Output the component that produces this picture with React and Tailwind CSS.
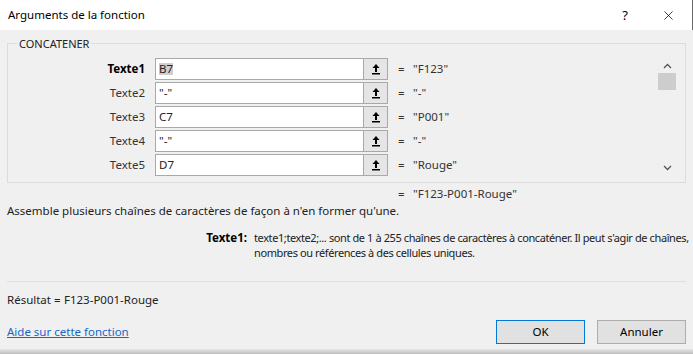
import { X } from "lucide-react";

const font = { fontFamily: '"Segoe UI", "Noto Sans", "Open Sans", sans-serif' };

const RefIcon = () => (
  <svg width="10" height="12" viewBox="0 0 10 12" className="text-black">
    <path d="M5 1 L1.5 5 H4 V9 H6 V5 H8.5 Z" fill="currentColor" />
    <rect x="1" y="10" width="8" height="1.5" fill="currentColor" />
  </svg>
);

const Chevron = ({ down }) => (
  <svg width="9" height="6" viewBox="0 0 9 6" className="text-[#555]">
    <path d={down ? "M1 1 L4.5 4.5 L8 1" : "M1 5 L4.5 1.5 L8 5"} fill="none" stroke="currentColor" strokeWidth="1.3" />
  </svg>
);

const rows = [
  { label: "Texte1", value: "B7", result: '"F123"', bold: true },
  { label: "Texte2", value: '"-"', result: '"-"' },
  { label: "Texte3", value: "C7", result: '"P001"' },
  { label: "Texte4", value: '"-"', result: '"-"' },
  { label: "Texte5", value: "D7", result: '"Rouge"' },
];

const ArgRow = ({ label, value, result, bold }) => (
  <div className="flex items-center h-[24px]">
    <div className={`w-[141px] shrink-0 text-right pr-[10px] ${bold ? "font-bold text-black" : "text-[#333]"}`}>
      {label}
    </div>
    <div className="flex h-[22px]">
      <div className="w-[209px] bg-white border border-[#a9a9a9] flex items-center pl-[3px] text-[#222]">
        {bold ? <span className="bg-[#cfcfcf]">{value}</span> : value}
      </div>
      <div className="w-[24px] bg-[#e5e5e5] border border-[#a9a9a9] border-l-0 flex items-center justify-center">
        <RefIcon />
      </div>
    </div>
    <div className="pl-[10px] w-[25px] shrink-0 text-[#333]">=</div>
    <div className="text-[#333]">{result}</div>
  </div>
);

export default function App() {
  return (
    <div style={font} className="w-[693px] h-[354px] bg-[#f0f0f0] text-[11.5px] leading-none flex flex-col overflow-hidden">
      <div className="h-[30px] bg-white flex items-center pl-[8px] shrink-0 border-r border-[#6a6a6a]">
        <span className="text-[11.5px] text-black flex-1">Arguments de la fonction</span>
        <span className="text-[13px] text-black w-[20px] mr-[26px] text-center">?</span>
        <X className="w-[15px] h-[15px] mr-[16px] text-black" strokeWidth={1.2} />
      </div>

      <fieldset className="mx-[7px] mt-[8px] border border-[#dcdcdc] px-[6px] pt-0 pb-[5px] min-w-0">
        <legend className="px-[2px] text-[#222] text-[11px] ml-[3px]">CONCATENER</legend>
        <div className="flex pt-[8px]">
          <div className="flex flex-col flex-1">
            {rows.map((r) => (
              <ArgRow key={r.label} {...r} />
            ))}
          </div>
          <div className="w-[18px] mr-[3px] flex flex-col items-center">
            <div className="mt-[6px]"><Chevron /></div>
            <div className="w-[18px] h-[17px] bg-[#cdcdcd] mt-[4px]" />
            <div className="flex-1" />
            <div className="mb-[6px]"><Chevron down /></div>
          </div>
        </div>
      </fieldset>

      <div className="flex h-[20px] items-center mt-[1px] text-[#333]">
        <div className="w-[398px]" />
        <div className="w-[15px]">=</div>
        <div>"F123-P001-Rouge"</div>
      </div>

      <div className="pl-[7px] mt-[1px] text-[#222]">
        Assemble plusieurs chaînes de caractères de façon à n'en former qu'une.
      </div>

      <div className="flex mt-[13px]">
        <div className="w-[247px] shrink-0 text-right font-bold text-black leading-[15px]">Texte1:</div>
        <div className="pl-[7px] text-[#222] text-[11px] tracking-[-0.4px] leading-[15px] whitespace-nowrap">
          <div>texte1;texte2;... sont de 1 à 255 chaînes de caractères à concaténer. Il peut s'agir de chaînes,</div>
          <div>nombres ou références à des cellules uniques.</div>
        </div>
      </div>

      <div className="mx-[7px] mt-[21px] border-t border-[#dfdfdf]" />

      <div className="flex pl-[7px] mt-[12px] text-[#222]">
        <span className="w-[57px] shrink-0">Résultat =</span>
        <span>F123-P001-Rouge</span>
      </div>

      <div className="flex items-center pl-[7px] mt-[15px]">
        <span className="text-[#1a66c4] underline flex-1">Aide sur cette fonction</span>
        <button className="w-[89px] h-[24px] bg-[#e1e1e1] border border-[#0078d7] text-black mr-[12px]">OK</button>
        <button className="w-[89px] h-[24px] bg-[#e1e1e1] border border-[#adadad] text-black mr-[7px]">Annuler</button>
      </div>

      <div className="flex-1" />
      <div className="h-[5px] bg-gradient-to-b from-[#e6e6e6] to-[#bdbdbd] shrink-0" />
    </div>
  );
}
